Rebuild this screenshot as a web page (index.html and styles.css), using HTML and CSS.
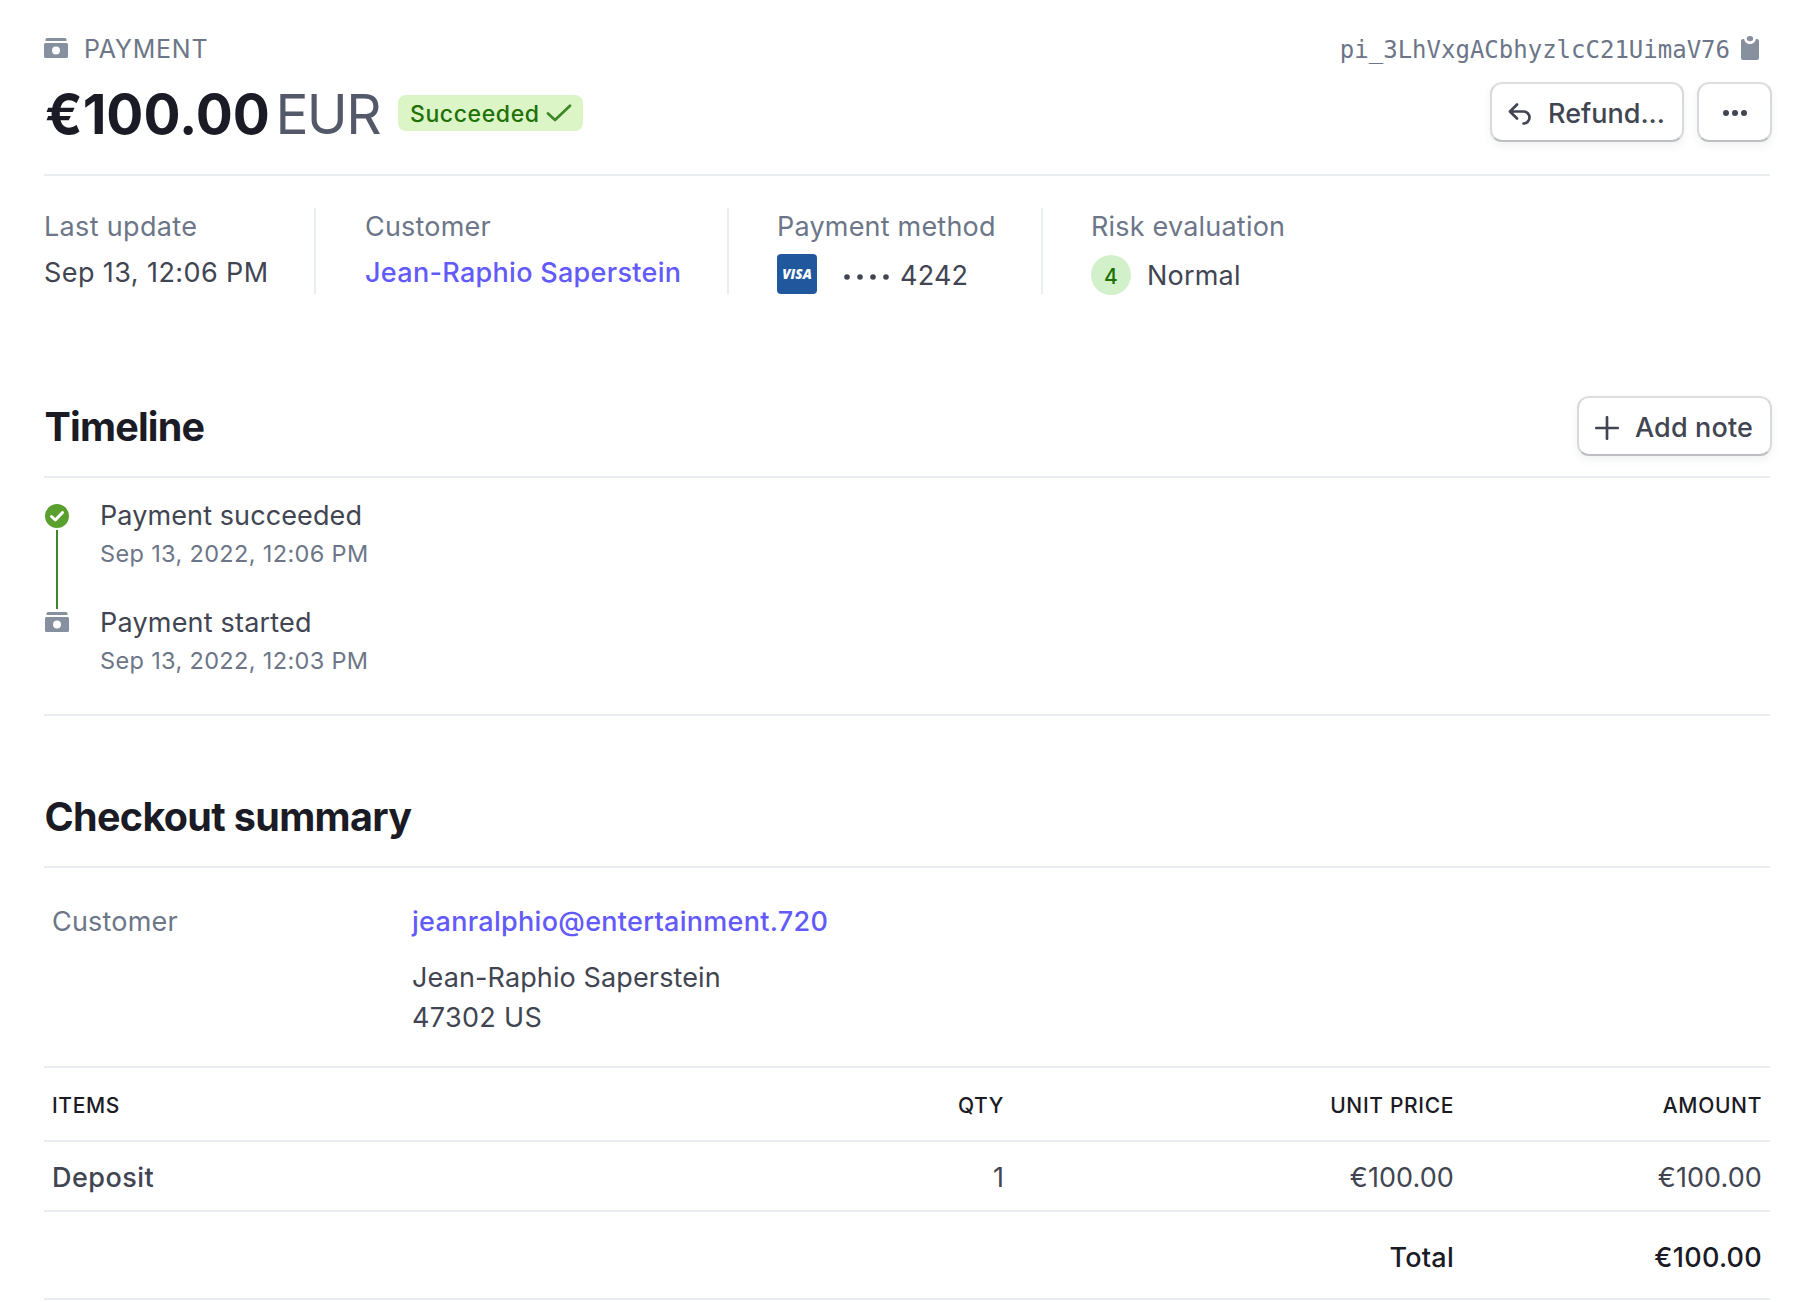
FILE: index.html
```html
<!DOCTYPE html>
<html lang="en">
<head>
<meta charset="utf-8">
<title>Payment</title>
<link rel="stylesheet" href="styles.css">
</head>
<body>
<main class="page">
  <header class="header">
    <div class="header-meta">
      <div class="kind">
        <svg class="icon-24" viewBox="0 0 24 20"><path fill="#87909f" d="M3 0h18a1.5 1.5 0 0 1 1.5 1.5V3h-21V1.500A1.500 1.500 0 0 1 3 0z"/><path fill="#87909f" fill-rule="evenodd" d="M1.500 5h21A1.500 1.500 0 0 1 24 6.500v12a1.500 1.500 0 0 1-1.500 1.500h-21A1.500 1.500 0 0 1 0 18.500v-12A1.500 1.500 0 0 1 1.500 5zM12 8.500a4 4 0 1 0 0 8 4 4 0 0 0 0-8z"/></svg>
        <span class="kind-text">PAYMENT</span>
      </div>
      <div class="pid">
        <span>pi_3LhVxgACbhyzlcC21UimaV76</span>
        <svg class="clip" width="18" height="24" viewBox="0 0 18 24"><ellipse cx="9" cy="2.600" rx="3.200" ry="2.600" fill="#87909f"/><path fill="#87909f" d="M2 3h1.200C3.600 6 6 8 9 8s5.400-2 5.800-5H16a2 2 0 0 1 2 2v17a2 2 0 0 1-2 2H2a2 2 0 0 1-2-2V5a2 2 0 0 1 2-2z"/></svg>
      </div>
    </div>
    <div class="header-main">
      <div class="title">
        <h1 class="amount">€100.00</h1>
        <span class="currency">EUR</span>
        <span class="badge">Succeeded
          <svg class="badge-check" width="26" height="18" viewBox="0 0 26 18"><path d="M2 9.500l7 6.500L24 1.800" fill="none" stroke="#3f8624" stroke-width="2.700" stroke-linecap="round" stroke-linejoin="round"/></svg>
        </span>
      </div>
      <div class="actions">
        <button class="btn btn-refund"><svg width="24" height="24" viewBox="0 0 24 24"><path d="M9 2.500L2 9.500l7 7M2.500 9.500h13a6 6 0 0 1 0 12" fill="none" stroke="#414552" stroke-width="2.700" stroke-linecap="round" stroke-linejoin="round"/></svg><span class="refund-text">Refund...</span></button>
        <button class="btn btn-more" aria-label="More"><svg width="24" height="6" viewBox="0 0 24 6"><g fill="#414552"><circle cx="3" cy="3" r="3"/><circle cx="12" cy="3" r="3"/><circle cx="21" cy="3" r="3"/></g></svg></button>
      </div>
    </div>
  </header>

  <section class="facts">
    <div class="fact fact-update"><div class="label">Last update</div><div class="value">Sep 13, 12:06 PM</div></div>
    <div class="fact fact-customer"><div class="label tight">Customer</div><div class="value link">Jean-Raphio Saperstein</div></div>
    <div class="fact fact-method"><div class="label tight">Payment method</div>
      <div class="value value-row"><span class="visa">VISA</span><svg class="dots" width="46" height="6" viewBox="0 0 46 6"><g fill="#414552"><circle cx="3" cy="3" r="2.800"/><circle cx="16" cy="3" r="2.800"/><circle cx="29" cy="3" r="2.800"/><circle cx="42" cy="3" r="2.800"/></g></svg><span>4242</span></div></div>
    <div class="fact fact-risk"><div class="label tight">Risk evaluation</div>
      <div class="value value-row"><span class="score">4</span><span class="risk">Normal</span></div></div>
  </section>

  <section class="timeline">
    <div class="section-head">
      <h2 class="h2 h2-timeline">Timeline</h2>
      <button class="btn btn-note"><svg width="24" height="24" viewBox="0 0 24 24"><path d="M12 1.300v21.400M1.300 12h21.400" stroke="#414552" stroke-width="2.700" stroke-linecap="round"/></svg><span class="note-text">Add note</span></button>
    </div>
    <ol class="events">
      <li class="event">
        <div class="rail">
          <svg class="event-check" width="24" height="24" viewBox="0 0 24 24"><circle cx="12" cy="12" r="12" fill="#5aa02f"/><path d="M6.500 12.500l3.800 3.500 7.200-7.500" fill="none" stroke="#fff" stroke-width="3" stroke-linecap="round" stroke-linejoin="round"/></svg>
          <div class="rail-line"></div>
        </div>
        <div><div class="event-title">Payment succeeded</div><div class="event-time">Sep 13, 2022, 12:06 PM</div></div>
      </li>
      <li class="event">
        <div class="rail">
          <svg class="event-cash" width="24" height="20" viewBox="0 0 24 20"><path fill="#87909f" d="M3 0h18a1.500 1.500 0 0 1 1.500 1.500V3h-21V1.500A1.500 1.500 0 0 1 3 0z"/><path fill="#87909f" fill-rule="evenodd" d="M1.500 5h21A1.500 1.500 0 0 1 24 6.500v12a1.500 1.500 0 0 1-1.500 1.500h-21A1.500 1.500 0 0 1 0 18.500v-12A1.500 1.500 0 0 1 1.500 5zM12 8.500a4 4 0 1 0 0 8 4 4 0 0 0 0-8z"/></svg>
        </div>
        <div><div class="event-title started">Payment started</div><div class="event-time">Sep 13, 2022, 12:03 PM</div></div>
      </li>
    </ol>
  </section>

  <section class="checkout">
    <div class="section-head"><h2 class="h2">Checkout summary</h2></div>
    <div class="buyer">
      <div class="label tight">Customer</div>
      <div>
        <div class="email link">jeanralphio@entertainment.720</div>
        <div class="address"><span class="buyer-name">Jean-Raphio Saperstein</span><br>47302 US</div>
      </div>
    </div>
    <div class="row row-head"><span class="items">ITEMS</span><span class="qty">QTY</span><span class="unit">UNIT PRICE</span><span>AMOUNT</span></div>
    <div class="row row-item"><span class="item-name">Deposit</span><span>1</span><span>€100.00</span><span>€100.00</span></div>
    <div class="row row-total"><span></span><span></span><span>Total</span><span>€100.00</span></div>
  </section>
</main>
</body>
</html>
```
FILE: styles.css
```css
* { box-sizing: border-box; }
body { margin: 0; background: #fff; color: #414552; font: 400 27px/36px Inter, "Liberation Sans", sans-serif; letter-spacing: .34px; }
h1, h2, ol { margin: 0; padding: 0; }
svg { display: block; flex: none; }
.page { padding: 34px 50px 0 44px; }

.header { height: 142px; border-bottom: 2px solid #ebeef1; }
.header-meta { display: flex; justify-content: space-between; height: 30px; line-height: 30px; color: #6c7688; }
.kind { display: flex; gap: 16px; font-size: 25px; letter-spacing: .75px; }
.icon-24 { width: 24px; height: 20px; margin-top: 4px; }
.pid { display: flex; gap: 11px; padding-right: 11px; font: 24px/33px "DejaVu Sans Mono", monospace; letter-spacing: 0; }
.clip { margin-top: 2px; }
.header-main { display: flex; justify-content: space-between; padding-top: 18px; }
.title { display: flex; height: 64px; padding-left: 1px; line-height: 64px; }
.amount { font-size: 55px; font-weight: 700; line-height: 64px; letter-spacing: 0; color: #1a1b25; }
.currency { margin-left: 5.500px; font-size: 55px; letter-spacing: -1.600px; color: #545969; }
.badge { display: flex; align-items: center; justify-content: space-between; width: 185px; height: 36px; margin: 13px 0 0 18px; padding: 2px 11px 0 12px; border-radius: 8px; background: #dcf5c6; color: #217005; font-size: 23px; font-weight: 500; line-height: 35px; letter-spacing: .6px; }
.badge-check { margin-bottom: 2px; }
.actions { display: flex; gap: 13px; margin-right: -2px; }
.btn { display: flex; align-items: center; height: 60px; padding: 3px 0 0; border: 2px solid; border-color: #dededf #d8d9dd #bebfc2; border-radius: 12px; background: #fff; color: #414552; font: 500 27px/36px Inter, sans-serif; box-shadow: 0 4px 8px rgba(60, 66, 87, .07); }
.btn-refund { width: 194px; gap: 16px; padding-left: 16px; }
.btn-more { width: 75px; justify-content: center; padding-top: 2px; }
.btn-note { width: 195px; gap: 16px; margin-right: -2px; padding-left: 16px; }
.note-text { letter-spacing: .14px; }

.facts { display: flex; padding-top: 32px; }
.fact { height: 86px; padding-top: 1px; border-right: 2px solid #ebeef1; }
.fact-update { width: 272px; }
.fact-customer { width: 413px; padding-left: 49px; }
.fact-method { width: 314px; padding-left: 48px; }
.fact-risk { padding-left: 48px; border-right: 0; }
.label { color: #6c7688; }
.tight { letter-spacing: .2px; }
.value { margin-top: 10px; letter-spacing: .42px; }
.link { color: #625afa; font-weight: 500; letter-spacing: .3px; }
.value-row { display: flex; align-items: center; height: 42px; letter-spacing: .2px; }
.visa { display: flex; align-items: center; justify-content: center; width: 40px; height: 40px; margin-bottom: 4px; border-radius: 4px; background: #21579c; color: #fff; font: italic 800 13.500px/40px "Open Sans", sans-serif; letter-spacing: 0; }
.dots { margin: 1px 10px 0 27px; }
.score { width: 40px; height: 40px; margin-bottom: 2px; border-radius: 50%; background: #d2f1cb; color: #217005; font-size: 21px; font-weight: 500; line-height: 43px; text-align: center; }
.risk { margin-left: 16px; }

.section-head { display: flex; justify-content: space-between; height: 82px; border-bottom: 2px solid #e9edf1; }
.h2 { padding-left: .5px; font-size: 39.500px; font-weight: 700; line-height: 62px; letter-spacing: -.66px; color: #1a1b25; }
.h2-timeline { letter-spacing: -.8px; }
.timeline { margin-top: 102px; border-bottom: 2px solid #e9edf1; }
.events { padding: 20px 0 38px; list-style: none; }
.event { display: flex; gap: 31px; padding-left: 1px; }
.event:first-child { height: 107px; }
.rail { display: flex; flex-direction: column; align-items: center; width: 24px; }
.event-check { margin-top: 6px; }
.event-cash { margin-top: 7px; }
.rail-line { flex: none; width: 2px; height: 79px; margin-top: 2px; background: #3f8624; }
.event-title { letter-spacing: .1px; }
.event-title.started { letter-spacing: .2px; }
.event-time { margin-top: 5px; color: #6c7688; font-size: 23.500px; line-height: 30px; letter-spacing: .35px; }

.checkout { margin-top: 70px; }
.buyer { display: grid; grid-template-columns: 360px 1fr; height: 200px; padding: 36px 8px 0; border-bottom: 2px solid #e9edf1; }
.address { margin-top: 18px; line-height: 40px; }
.buyer-name { letter-spacing: .12px; }
.row { display: grid; grid-template-columns: 700px 252px 450px 1fr; padding: 0 8px; border-bottom: 2px solid #e9edf1; text-align: right; }
.row > :first-child { text-align: left; }
.row-head { height: 74px; color: #1a1b25; font-size: 21px; font-weight: 500; line-height: 76px; letter-spacing: .65px; }
.row-item { height: 70px; line-height: 71px; letter-spacing: .1px; }
.item-name { font-weight: 500; letter-spacing: .45px; }
.row-total { height: 88px; color: #1a1b25; font-weight: 500; line-height: 91px; letter-spacing: .26px; }
```
